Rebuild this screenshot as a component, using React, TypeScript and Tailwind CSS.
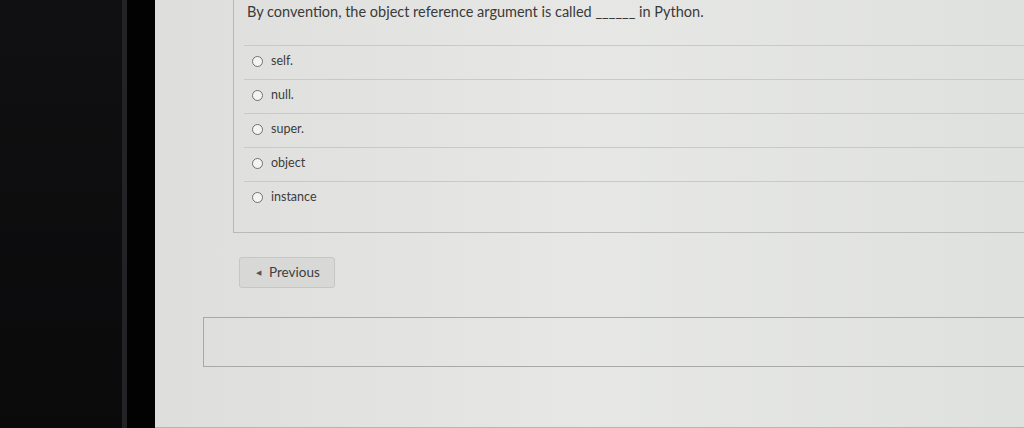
import React from 'react';

const options = ['self.', 'null.', 'super.', 'object', 'instance'];

const App: React.FC = () => {
  return (
    <div
      className="flex h-[428px] w-[1024px] overflow-hidden bg-black"
      style={{ fontFamily: 'Lato, "Liberation Sans", sans-serif' }}
    >
      {/* monitor bezel */}
      <div className="flex h-full w-[155px] shrink-0">
        <div className="h-full w-[122px] bg-gradient-to-b from-[#101012] to-[#0a0a0b]" />
        <div className="h-full w-[5px] bg-[#232325]" />
        <div className="h-full flex-1 bg-[#020202]" />
      </div>

      {/* page */}
      <div className="flex h-full flex-1 flex-col bg-gradient-to-r from-[#dededc] via-[#e7e8e6] to-[#dfe1df]">
        <div className="ml-[78px] flex h-[233px] flex-col border-b border-l border-[#b9b9b7]">
          <p className="pl-[13px] pt-[3px] text-[14.5px] leading-[18px] text-[#3a3a3a]">
            By convention, the object reference argument is called ______ in Python.
          </p>

          <ul className="ml-[10px] mt-[24px] flex flex-col">
            {options.map((opt) => (
              <li
                key={opt}
                className="flex h-[34px] items-center gap-[8px] border-t border-[#c9cac8] pb-[3px] pl-[8px]"
              >
                <span className="h-[11px] w-[11px] rounded-full border border-[#707070] bg-[#f4f4f3]" />
                <span className="text-[12.5px] text-[#3c3c3c]">{opt}</span>
              </li>
            ))}
          </ul>
        </div>

        <div className="ml-[84px] mt-[24px]">
          <button className="flex h-[31px] w-[96px] items-center gap-[8px] rounded-[3px] border border-[#c6c6c4] bg-[#d8d8d6] pl-[16px] text-[13.5px] text-[#3e3e3e]">
            <span className="text-[7px] text-[#555]">◀</span>
            Previous
          </button>
        </div>

        <div className="ml-[48px] mt-[29px] h-[50px] border border-r-0 border-[#a9a9a7]" />
        <div className="mt-auto h-px bg-[#b5b5b3]" />
      </div>
    </div>
  );
};

export default App;
